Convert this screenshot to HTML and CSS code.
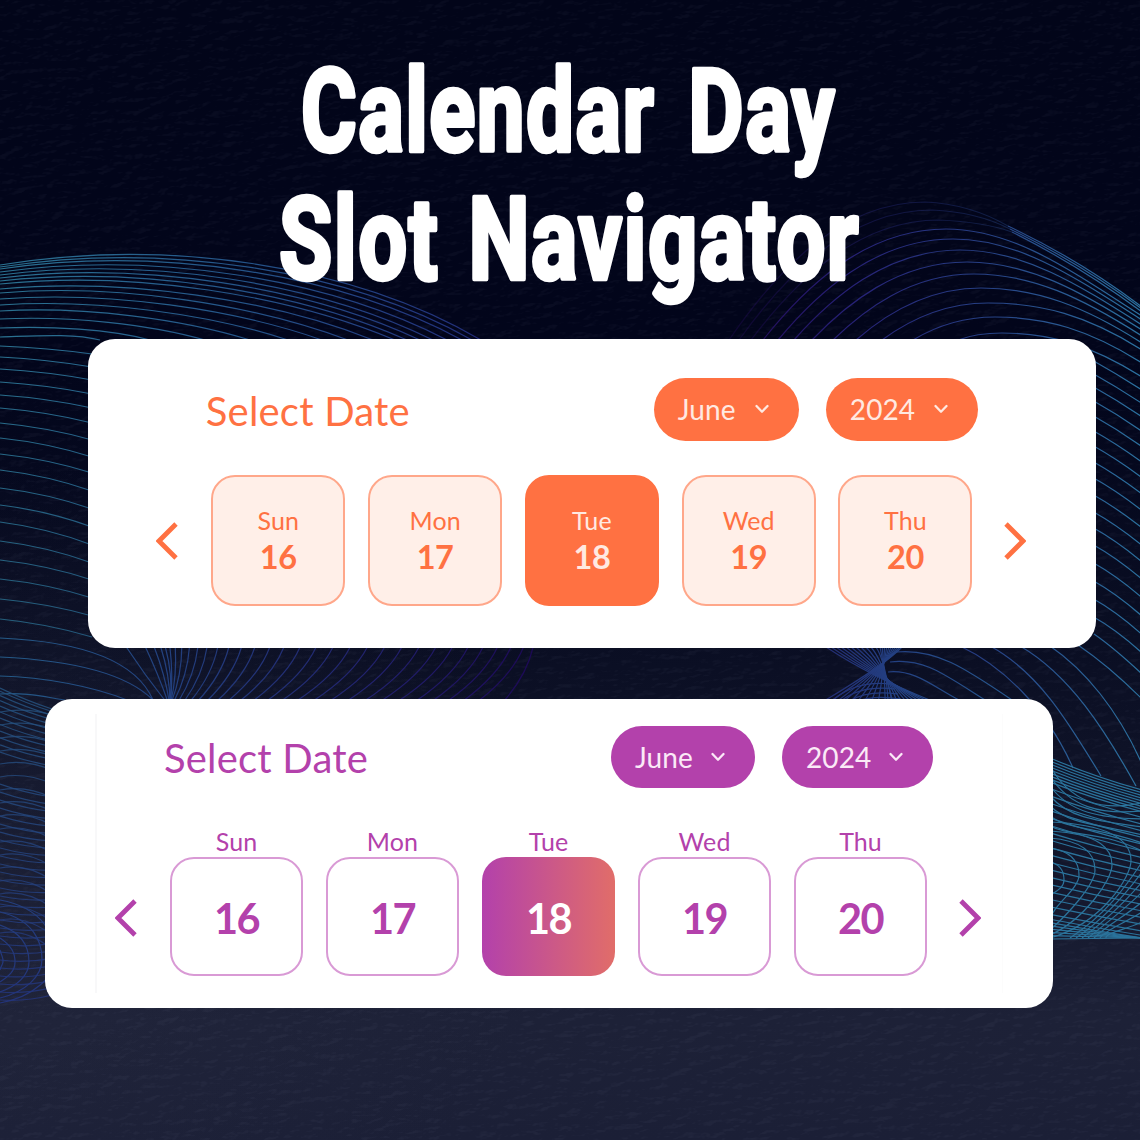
FILE: index.html
```html
<!DOCTYPE html>
<html lang="en">
<head>
<meta charset="utf-8">
<title>Calendar Day Slot Navigator</title>
<link rel="stylesheet" href="styles.css">
</head>
<body>
<svg class="backdrop" viewBox="0 0 1140 1140" aria-hidden="true">
  <defs>
    <linearGradient id="left" gradientUnits="userSpaceOnUse" x1="0" y1="0" x2="540" y2="0">
      <stop offset="0" stop-color="#2a7291"/><stop offset=".45" stop-color="#245489"/><stop offset=".85" stop-color="#22317c"/><stop offset="1" stop-color="#210c68"/>
    </linearGradient>
    <linearGradient id="strip" gradientUnits="userSpaceOnUse" x1="0" y1="0" x2="540" y2="0">
      <stop offset="0" stop-color="#245a87"/><stop offset=".35" stop-color="#223d7d"/><stop offset=".7" stop-color="#21206d"/><stop offset="1" stop-color="#1c0755"/>
    </linearGradient>
    <linearGradient id="right" gradientUnits="userSpaceOnUse" x1="725" y1="0" x2="1140" y2="0">
      <stop offset="0" stop-color="#210752"/><stop offset=".3" stop-color="#262076"/><stop offset=".6" stop-color="#263d83"/><stop offset="1" stop-color="#2b719f"/>
    </linearGradient>
    <linearGradient id="knot" gradientUnits="userSpaceOnUse" x1="825" y1="0" x2="1010" y2="0">
      <stop offset="0" stop-color="#232c72"/><stop offset=".35" stop-color="#233f82"/><stop offset="1" stop-color="#27598f"/>
    </linearGradient>
    <linearGradient id="side" gradientUnits="userSpaceOnUse" x1="0" y1="690" x2="0" y2="1000">
      <stop offset="0" stop-color="#25537f"/><stop offset="1" stop-color="#23347c"/>
    </linearGradient>
    <filter id="grain" x="0" y="0" width="100%" height="100%" color-interpolation-filters="sRGB">
      <feTurbulence type="fractalNoise" baseFrequency=".06 .14" numOctaves="3" seed="4"/>
      <feDiffuseLighting surfaceScale="4" lighting-color="#ffffff"><feDistantLight azimuth="60" elevation="40"/></feDiffuseLighting>
      <feColorMatrix values="0 0 0 0 .75  0 0 0 0 .78  0 0 0 0 .9  4 0 0 0 -2.9"/>
    </filter>
  </defs>
  <rect class="texture" width="1140" height="1140" filter="url(#grain)"/>
  <g id="waves" class="waves"></g>
</svg>

<main class="poster">
  <h1 class="title">
    <svg class="title-line" viewBox="0 0 600 128">
      <text x="31" y="111" textLength="535" lengthAdjust="spacingAndGlyphs">Calendar Day</text>
    </svg>
    <svg class="title-line" viewBox="0 0 600 128">
      <text class="tight" x="9" y="111" textLength="581" lengthAdjust="spacingAndGlyphs">Slot Navigator</text>
    </svg>
  </h1>

  <section class="card orange">
    <header class="head">
      <h2 class="label">Select Date</h2>
      <div class="pills">
        <button class="pill">June<svg class="caret" viewBox="0 0 14 10"><path d="M1.5 2 7 7.7 12.5 2"/></svg></button>
        <button class="pill year">2024<svg class="caret" viewBox="0 0 14 10"><path d="M1.5 2 7 7.7 12.5 2"/></svg></button>
      </div>
    </header>
    <div class="days">
      <svg class="arrow" viewBox="0 0 22 38"><path d="M20 2 3 19 20 36"/></svg>
      <div class="day"><span class="name">Sun</span><b class="num">16</b></div>
      <div class="day"><span class="name">Mon</span><b class="num">17</b></div>
      <div class="day active"><span class="name">Tue</span><b class="num">18</b></div>
      <div class="day"><span class="name">Wed</span><b class="num">19</b></div>
      <div class="day"><span class="name">Thu</span><b class="num">20</b></div>
      <svg class="arrow" viewBox="0 0 22 38"><path d="M2 2 19 19 2 36"/></svg>
    </div>
  </section>

  <section class="card purple">
    <div class="frame">
      <header class="head">
        <h2 class="label">Select Date</h2>
        <div class="pills">
          <button class="pill">June<svg class="caret" viewBox="0 0 14 10"><path d="M1.5 2 7 7.7 12.5 2"/></svg></button>
          <button class="pill year">2024<svg class="caret" viewBox="0 0 14 10"><path d="M1.5 2 7 7.7 12.5 2"/></svg></button>
        </div>
      </header>
      <div class="days">
        <svg class="arrow" viewBox="0 0 22 38"><path d="M20 2 3 19 20 36"/></svg>
        <div class="day"><span class="name">Sun</span><b class="num">16</b></div>
        <div class="day"><span class="name">Mon</span><b class="num">17</b></div>
        <div class="day active"><span class="name">Tue</span><b class="num">18</b></div>
        <div class="day"><span class="name">Wed</span><b class="num">19</b></div>
        <div class="day"><span class="name">Thu</span><b class="num">20</b></div>
        <svg class="arrow" viewBox="0 0 22 38"><path d="M2 2 19 19 2 36"/></svg>
      </div>
    </div>
  </section>
</main>
<script src="waves.js"></script>
</body>
</html>
```
FILE: styles.css
```css
* { box-sizing: border-box; }
body {
  margin: 0;
  width: 1140px;
  height: 1140px;
  overflow: hidden;
  position: relative;
  font-family: Lato, "Liberation Sans", sans-serif;
  background:
    radial-gradient(ellipse 560px 420px at 0 880px, rgba(42, 46, 68, .35), transparent),
    linear-gradient(#020519 0, #02051b 360px, #0a0e23 640px, #12162b 860px, #1d2137 1020px, #1b1f36 1140px);
}
.backdrop { position: absolute; inset: 0; width: 1140px; height: 1140px; }
.texture { opacity: .035; }
.waves { fill: none; stroke-width: 1.2; }

.poster { position: relative; padding-top: 40px; display: flex; flex-direction: column; align-items: center; }
.title { margin: 0 0 44px; width: 600px; height: 256px; display: flex; flex-direction: column; }
.title-line { display: block; width: 600px; height: 128px; overflow: visible; }
.title-line text {
  font: 700 115px Roboto, sans-serif;
  letter-spacing: 2px;
  word-spacing: 14px;
  fill: #fff;
  stroke: #fff;
  stroke-width: 4.5px;
  stroke-linejoin: round;
}
.title-line .tight { word-spacing: 8px; }

.card { width: 1008px; height: 309px; border-radius: 27px; background: #fff; }
.orange { --ink: #ff7142; margin: -1px 0 0 44.6px; padding: 39px 68.5px 0 68px; }
.purple { --ink: #b341ab; margin: 51px 0 0 -42px; padding: 15px 50px; }
.frame { height: 279px; border-left: 2px solid #f8f8f9; border-right: 1px solid #fcfcfc; padding: 12px 20px 0 18px; }

.head { display: flex; justify-content: space-between; align-items: flex-start; }
.orange .head { padding: 0 50px 0 49.5px; }
.purple .head { padding: 0 49px; }
.label { margin: 8px 0 0; font-size: 40px; line-height: 50px; font-weight: 400; letter-spacing: .2px; color: var(--ink); }
.pills { display: flex; gap: 27px; }
.pill {
  width: 145px;
  height: 63px;
  border: 0;
  border-radius: 32px;
  padding: 0 30px 2px 24px;
  display: flex;
  align-items: center;
  justify-content: space-between;
  font: 400 28px Lato, sans-serif;
  letter-spacing: .1px;
  color: #ffe9e1;
  background: var(--ink);
}
.year { width: 152px; }
.caret { width: 14px; height: 10px; margin-top: 1px; }
.caret path { fill: none; stroke: currentColor; stroke-width: 2.3; stroke-linecap: round; stroke-linejoin: round; }

.days { display: flex; align-items: center; color: var(--ink); }
.orange .days { margin-top: 34px; }
.arrow { width: 22px; height: 38px; flex: none; }
.arrow path { fill: none; stroke: var(--ink); stroke-width: 4.8; }
.arrow:first-child { margin-right: 33px; }
.arrow:last-child { margin-left: 32px; }
.day { display: flex; flex-direction: column; align-items: center; }
.day + .day { margin-left: 22.8px; }
.name { font-size: 25px; line-height: 30px; letter-spacing: .1px; }
.num { font-weight: 700; }

.orange .day {
  width: 134px;
  height: 131px;
  padding-top: 28px;
  border: 2px solid #ffa78a;
  border-radius: 24px;
  background: #ffefe8;
}
.orange .num { font-size: 32.5px; line-height: 44px; letter-spacing: -.4px; }
.orange .day.active { background: var(--ink); border-color: var(--ink); color: #ffe9e1; }

.purple .pill { width: 144px; color: #fbe9f7; height: 62px; padding-bottom: 0; }
.purple .caret { margin-top: 0; }
.purple .year { width: 151px; }
.purple .label { margin-top: 7px; }
.purple .days { margin-top: 38px; align-items: flex-end; }
.purple .num {
  width: 133px;
  height: 119px;
  display: grid;
  place-items: center;
  padding-top: 3px;
  border: 2px solid #d99ad5;
  border-radius: 24px;
  font-size: 41.5px;
  letter-spacing: -1.6px;
}
.purple .day + .day { margin-left: 23px; }
.purple .name { line-height: 31px; }
.purple .active .num { border: 0; color: #fff; background: linear-gradient(90deg, #b341ab, #e16d69); }
.purple .arrow { margin-bottom: 39px; }
```
FILE: waves.js
```js
const waves = document.getElementById('waves');
const lerp = (a, b, t) => a + (b - a) * t;
function line(d, stroke, opacity = 1) {
  const p = document.createElementNS('http://www.w3.org/2000/svg', 'path');
  p.setAttribute('d', d);
  p.setAttribute('stroke', stroke);
  p.setAttribute('opacity', opacity);
  waves.appendChild(p);
}

// Upper left crest
const crestY = [265, 267, 269, 272, 275, 278, 281, 284, 289, 293, 299, 305, 311, 319, 328, 337];
const crestX = [481, 472, 462, 447, 433, 420, 407, 395, 373, 348, 322, 288, 250, 205, 150, 100];
crestY.forEach((y, i) => {
  const t = i / 15, x = crestX[i];
  line(`M0 ${y}C${x * .343} ${y - x * .343 * lerp(.164, .03, t)} ${x * .73} ${339 - x * .27 * lerp(.58, .22, t)} ${x} 340`, 'url(#left)');
});

// Left edge, beside the first card
const edgeA = [346, 357, 369, 382, 395, 408, 423, 438, 454, 470, 488, 505, 522, 541, 560, 579, 599, 619];
const edgeB = [353, 366, 379, 393, 407, 422, 439, 456, 472, 490, 508, 526, 544, 562, 579, 597, 615, 636];
edgeA.forEach((y, i) => line(`M0 ${y}Q48 ${lerp(y, edgeB[i], .28)} 92 ${edgeB[i] + 1}`, 'url(#left)', lerp(1, .8, i / 17)));
line('M0 638C70 641 134 656 153 700', 'url(#strip)');
line('M0 657C65 660 125 672 153 700', 'url(#strip)');
line('M0 676C45 677 95 687 127 700', 'url(#strip)');
line('M0 694C25 692 45 697 65 700', 'url(#strip)');

// Fan between the two cards
const fanTop = [330, 380, 403, 420, 432, 444, 458, 475, 495, 517, 541, 569, 598, 631, 666, 705, 742, 784, 826, 870, 915, 960, 1005, 1050, 1095, 1139, 1182, 1223, 1262, 1300, 1335, 1368, 1393];
const fanEnd = [432, 438, 442, 444, 445, 446, 447, 449, 455, 467, 482, 498, 517, 541, 567, 596, 627, 661, 697, 735, 775, 818, 862, 907, 952, 996, 1041, 1087, 1130, 1170, 1210, 1250, 1317];
fanTop.forEach((v, i) => {
  const a = v / 2.613, b = fanEnd[i] / 2.613;
  line(`M${a} 647Q${lerp(a, b, .32) + (i > 4 ? 3 : 6)} 675 ${b} 701`, 'url(#strip)');
});

// Lower left fold
for (let i = 0; i < 40; i++) {
  const t = i / 39, y = 688 + 312 * Math.pow(t, t < .3 ? 1.25 : 1);
  line(`M0 ${y}Q25 ${y + lerp(12, 2, t)} 52 ${y + lerp(21, -5, t)}`, 'url(#side)', .85);
}
for (let i = 0; i < 18; i++) {
  const y = 712 + i * 13;
  line(`M0 ${y}Q26 ${y - 5} 52 ${y + lerp(3, 16, i / 17)}`, 'url(#side)', .8);
}
[[3, 950, 970], [15, 938, 982], [29, 925, 992], [42, 912, 998], [55, 900, 1003]].forEach(([x, a, b]) =>
  line(`M0 ${a}C${x * .8} ${a + 8} ${x} ${lerp(a, b, .35)} ${x} ${lerp(a, b, .55)}S${x * .6} ${b - 6} 0 ${b}`, 'url(#side)'));

// Upper right crest
const hillX = [729, 739, 751, 763, 778, 794, 812, 833, 856, 882, 913, 958];
const hillTop = [202, 210, 220, 229, 239, 250, 262, 274, 288, 303, 317, 333];
const hillEnd = [307, 309, 312, 316, 320, 325, 330, 336, 343, 350, 363, 377];
hillX.forEach((x, i) => {
  const px = 925 + i * 7, py = hillTop[i], w = px - x, h = 339 - py, r = 1140 - px;
  const rise = `M${x} 340C${x + w * .22} ${339 - h * .45} ${px - w * .45} ${py} ${px} ${py}`;
  if (i < 3) {
    line(`${rise}Q${px + 45} ${py + 2} ${1008 + i * 2} ${226 + i * 3}`, 'url(#right)', .4);
    line(`M${1008 + i * 2} ${226 + i * 3}Q1080 ${260 + i * 3} 1142 ${hillEnd[i]}`, 'url(#right)');
  } else {
    line(`${rise}C${px + r * .35} ${py} ${1140 - r * .35} ${hillEnd[i] - r * .23} 1142 ${hillEnd[i]}`, 'url(#right)');
  }
});

// Right edge, beside the first card
const slopeA = [363, 376, 389, 403, 418, 433, 448, 464, 480, 497, 514, 530, 547, 565, 583, 601, 619];
slopeA.forEach((y, i) => line(`M1092 ${y - 3}Q1117 ${y + 11} 1142 ${y + lerp(27, 34, i / 16)}`, 'url(#right)'));
line('M1094 634C1110 645 1127 660 1142 674', 'url(#right)');
line('M1078 645C1100 660 1123 680 1142 699', 'url(#right)');
line('M1050 646C1085 670 1118 710 1142 764', 'url(#right)');
line('M1020 646C1070 675 1105 730 1136 786', 'url(#right)');
line('M990 646C1040 673 1070 725 1101 776', 'url(#right)');
line('M960 646C1000 665 1045 705 1073 768', 'url(#right)');

// Crossing knot between the cards
line('M896 652C935 648 965 668 1012 700', 'url(#knot)');
line('M890 662C925 658 945 675 985 700', 'url(#knot)');
line('M888 672C915 669 935 688 959 700', 'url(#knot)');
for (let i = 0; i < 11; i++) {
  const t = i / 10;
  line(`M${lerp(826, 876, t)} 647Q${lerp(870, 886, t)} ${lerp(676, 662, t)} ${lerp(932, 888, t)} 701`, 'url(#knot)');
  line(`M${lerp(902, 880, t)} 647Q${lerp(886, 884, t)} ${lerp(664, 668, t)} ${lerp(824, 892, t)} 701`, 'url(#knot)');
}
for (let i = 0; i < 4; i++) line(`M${832 + i * 9} 701Q${855 + i * 6} ${680 + i * 5} ${892 + i * 3} ${684 + i * 5}`, 'url(#knot)');

// Lower right mesh
for (let i = 0; i < 34; i++) {
  const t = i / 33, u = t < .25 ? t * .55 : t > .8 ? 1 - (1 - t) * .6 : lerp(.1375, .88, (t - .25) / .55);
  const a = lerp(758, 939, u), b = lerp(787, 938, Math.min(1, u * 1.08 + .02));
  line(`M1050 ${a}Q1095 ${lerp(a, b, .5) + lerp(3, 0, t)} 1142 ${b}`, '#2b739b');
}
[[1064, 863, 880, 908], [1079, 850, 875, 921], [1095, 840, 870, 930], [1112, 833, 865, 935], [1131, 824, 861, 938]].forEach(([x, a, m, b]) =>
  line(`M1050 ${a - 2}C${x - 10} ${a + 1} ${x} ${m - 15} ${x} ${m}S${x - 28} ${b - 15} 1050 ${b}`, '#2b739b'));
for (let i = 0; i < 7; i++) {
  const a = 766 + i * 10;
  line(`M1050 ${a}C1070 ${a + 35 - i * 4} 1100 ${812 + i * 3} 1142 ${803 + i * 8}`, '#2b739b');
  line(`M1142 ${862 + i * 10}C1125 ${888 + i * 7} 1105 ${915 + i * 3} ${1070 + i * 6} 938`, '#2b739b');
}
```
